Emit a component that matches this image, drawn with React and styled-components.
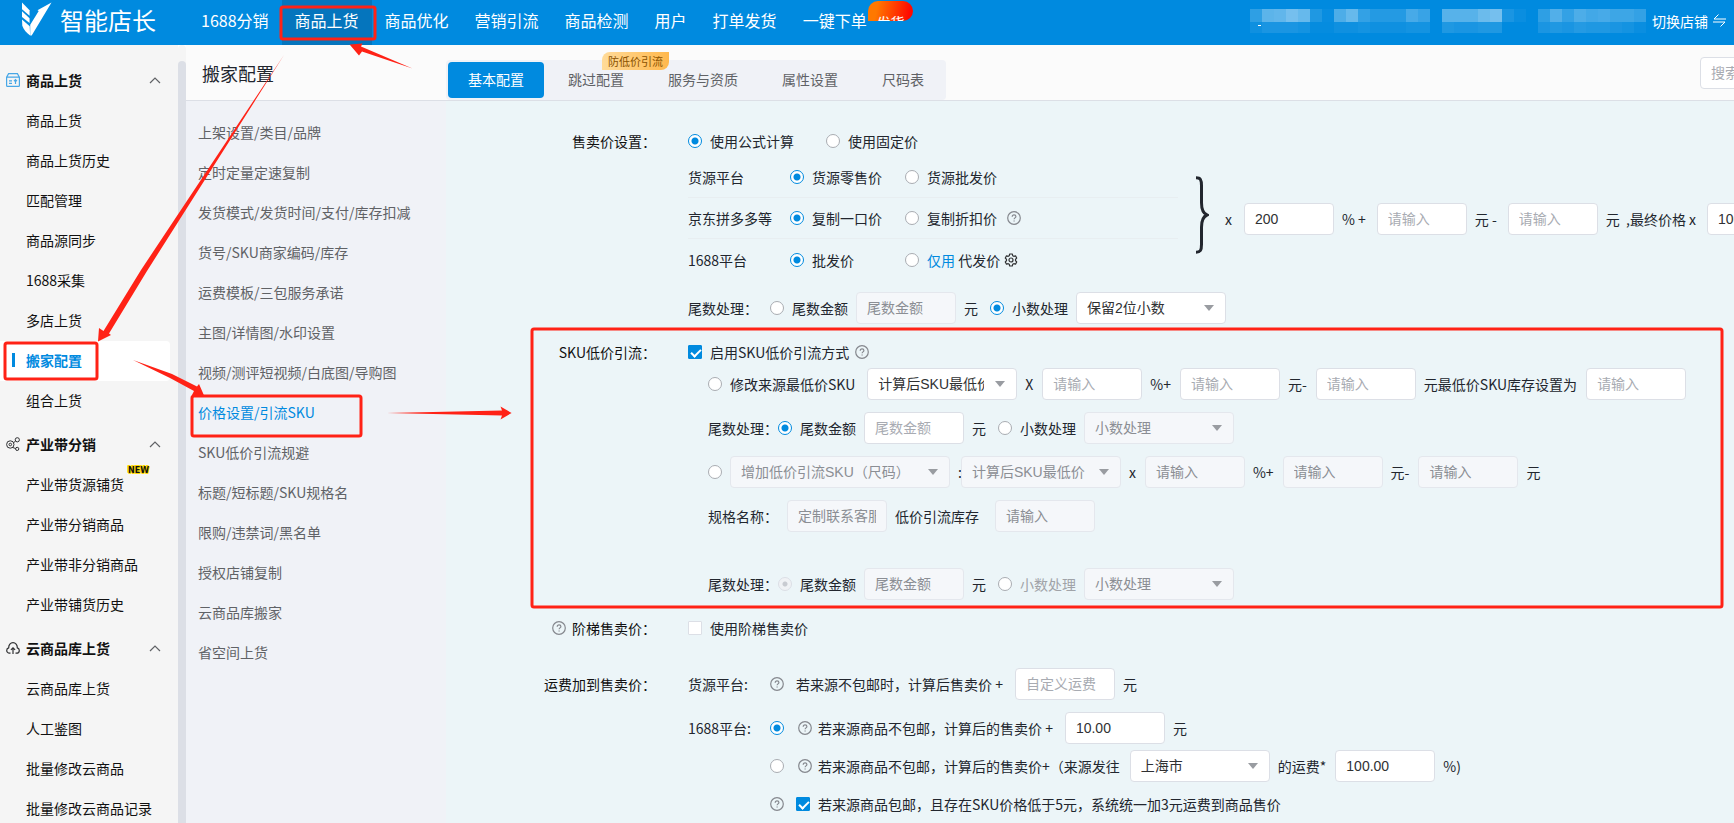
import React from "react";
import styled, { createGlobalStyle, css } from "styled-components";

const topNav = [
  { text: "1688分销" },
  { text: "商品上货", active: true },
  { text: "商品优化" },
  { text: "营销引流" },
  { text: "商品检测" },
  { text: "用户" },
  { text: "打单发货" },
  { text: "一键下单", badge: "发货" },
];

const sideGroups = [
  {
    title: "商品上货",
    icon: "shop",
    items: ["商品上货", "商品上货历史", "匹配管理", "商品源同步", "1688采集", "多店上货", "搬家配置", "组合上货"],
  },
  {
    title: "产业带分销",
    icon: "share",
    items: ["产业带货源铺货", "产业带分销商品", "产业带非分销商品", "产业带铺货历史"],
  },
  {
    title: "云商品库上货",
    icon: "cloud",
    items: ["云商品库上货", "人工鉴图", "批量修改云商品", "批量修改云商品记录"],
  },
];

const settings = [
  "上架设置/类目/品牌",
  "定时定量定速复制",
  "发货模式/发货时间/支付/库存扣减",
  "货号/SKU商家编码/库存",
  "运费模板/三包服务承诺",
  "主图/详情图/水印设置",
  "视频/测评短视频/白底图/导购图",
  "价格设置/引流SKU",
  "SKU低价引流规避",
  "标题/短标题/SKU规格名",
  "限购/违禁词/黑名单",
  "授权店铺复制",
  "云商品库搬家",
  "省空间上货",
];

const tabs = [
  { text: "基本配置", active: true },
  { text: "跳过配置", badge: "防低价引流" },
  { text: "服务与资质" },
  { text: "属性设置" },
  { text: "尺码表" },
];

// opacity of each masked cell in the account strip, one list per row
const maskRows = [
  [0.18, 0.36, 0.38, 0.46, 0.4, 0.12, 0.03, 0.3, 0.4, 0.2, 0.14, 0.14, 0.14, 0.28, 0.22, 0, 0.34, 0.34, 0.34, 0.42, 0.46, 0.1, 0.04, 0, 0.18, 0.32, 0.2, 0.3, 0.26, 0.28, 0.24, 0.24, 0.2],
  [0.06, 0.1, 0.1, 0.1, 0.08, 0.02, 0.02, 0.06, 0.06, 0.08, 0.06, 0.06, 0.06, 0.08, 0.08, 0, 0.12, 0.1, 0.1, 0.12, 0.12, 0, 0, 0, 0.1, 0.12, 0.1, 0.14, 0.12, 0.12, 0.1, 0.08, 0.04],
];

const HelpIcon = () => (
  <Icon width="14" height="14" viewBox="0 0 14 14" fill="none" stroke="#85888e" strokeWidth="1.2">
    <circle cx="7" cy="7" r="6.3" />
    <path d="M5.2 5.7c0-1.1.8-1.9 1.9-1.9s1.8.7 1.8 1.7c0 1.3-1.8 1.4-1.8 2.7M7.1 9.4v1" />
  </Icon>
);

const GearIcon = () => (
  <Icon width="14" height="14" viewBox="0 0 14 14" fill="none" stroke="#303133" strokeWidth="1.2" strokeLinejoin="round">
    <path d="M5.7 1h2.6l.4 1.7 1.1.6 1.7-.5 1.2 2.2-1.2 1.3v1.4l1.2 1.3-1.2 2.2-1.7-.5-1.1.6-.4 1.7H5.700l-.4-1.7-1.1-.6-1.7.5L1.300 9l1.200-1.300V6.300L1.300 5l1.200-2.200 1.700.5 1.100-.6z" />
    <circle cx="7" cy="7" r="2" />
  </Icon>
);

const GroupIcon = ({ name }) => {
  if (name === "shop") {
    return (
      <Icon width="14" height="14" viewBox="0 0 14 14" fill="none" stroke="#48a7e6" strokeWidth="1.2">
        <path d="M2.6.7h8.800l2 3.500H.6zM.6 4.200v8.200c0 .6.3.9.9.9h11c.6 0 .9-.3.9-.9V4.200" />
        <path d="M3 7.800h3M3 10.300h3M9.500 11V6.800M8 8.200l1.500-1.500L11 8.200" />
      </Icon>
    );
  }
  if (name === "share") {
    return (
      <Icon width="14" height="14" viewBox="0 0 14 14" fill="none" stroke="#303133">
        <circle cx="4.3" cy="7.5" r="3.7" />
        <circle cx="4.3" cy="7.5" r="1.3" />
        <circle cx="11.3" cy="2.8" r="2.1" />
        <circle cx="11.2" cy="11.9" r="1.6" />
        <path d="M7.5 5.7l2-1.5M6.7 10.5l3 1" />
      </Icon>
    );
  }
  return (
    <Icon width="14" height="14" viewBox="0 0 14 14" fill="none" stroke="#303133" strokeWidth="1.2">
      <path d="M4.5 12.2h-.9C1.900 12.200.7 11 .7 9.400c0-1.300.8-2.300 2-2.600C2.600 3.900 4.500 1.700 7 1.700s4.400 2.200 4.300 5.100c1.200.3 2 1.300 2 2.600 0 1.600-1.200 2.800-2.900 2.800h-.9" />
      <path d="M7 13V6.800M4.900 8.900L7 6.800l2.100 2.100" />
    </Icon>
  );
};

const Logo = () => (
  <svg width="30" height="36" viewBox="0 0 31 36" fill="#fff">
    <path d="M0 0l7.800 8v5.500L0 7z" />
    <path d="M0 9l7.800 7.200v4.800L0 15z" />
    <path d="M0 17.500l8 7 .4 9.500C5 31.500 1.500 28 .3 24z" />
    <path d="M30.500 0L10 34H8.500V23l8.800-14.200-1.300-.8z" />
  </svg>
);

const Choice = ({ text, type = "radio", muted, ...rest }) => (
  <ChoiceLabel $muted={muted}>
    {type === "radio" ? <Radio type="radio" {...rest} /> : <Checkbox type="checkbox" {...rest} />}
    {text}
  </ChoiceLabel>
);

const Select = ({ label, text, width = 150, disabled }) => (
  <SelectBox $width={width}>
    <SelectControl aria-label={label || text} disabled={disabled}>
      <option>{text}</option>
    </SelectControl>
    <Caret width="10" height="6" viewBox="0 0 10 6">
      <path d="M0 0h10L5 6z" fill="#999ca1" />
    </Caret>
  </SelectBox>
);

const Num = ({ label, hint = "请输入", ...rest }) => (
  <Input aria-label={label} placeholder={hint} {...rest} />
);

// last-digit handling: fixed amount or decimal rounding
const TailRow = ({ name, mode, option, amountDisabled, optionDisabled, locked, wide }) => (
  <Row>
    <TailLabel $wide={wide}>尾数处理：</TailLabel>
    <Choice name={name} text="尾数金额" defaultChecked={mode === "amount"} disabled={locked} />
    <Num label="尾数金额" hint="尾数金额" disabled={amountDisabled} />
    <Unit $end={4}>元</Unit>
    <Choice name={name} text="小数处理" defaultChecked={mode === "decimal"} muted={locked} />
    <Select label="小数处理" text={option} disabled={optionDisabled} />
  </Row>
);

const App = () => {
  return (
    <Page>
      <GlobalStyle />
      <TopBar>
        <Brand>
          <Logo />
          智能店长
        </Brand>
        <Nav>
          {topNav.map((item) => (
            <NavLink href="#" key={item.text} $active={item.active}>
              {item.text}
              {item.badge && <HotBadge>{item.badge}</HotBadge>}
            </NavLink>
          ))}
        </Nav>
        <Account>
          <svg width="396" height="24" viewBox="0 0 396 24" fill="#fff">
            {maskRows.map((cells, y) =>
              cells.map((o, x) => (
                <rect key={x + "-" + y} x={x * 12} y={y * 13} width="12" height={y ? 11 : 13} opacity={o} />
              ))
            )}
            <rect x="8" y="16" width="3" height="1" />
          </svg>
          <Switch type="button">
            切换店铺
            <svg width="13" height="13" viewBox="0 0 13 13" fill="none" stroke="#fff">
              <path d="M5.5.5L1 5h12M0 8h12l-4.500 4.500" />
            </svg>
          </Switch>
        </Account>
      </TopBar>
      <Body>
        <Sidebar>
          {sideGroups.map((group) => (
            <Group key={group.title}>
              <GroupTitle type="button">
                <GroupIcon name={group.icon} />
                {group.title}
                <Chevron width="12" height="8" viewBox="0 0 12 8" fill="none" stroke="#606266" strokeWidth="1.2">
                  <path d="M1 7l5-5 5 5" />
                </Chevron>
              </GroupTitle>
              {group.items.map((item) => (
                <SideLink href="#" key={item} $active={item === "搬家配置"}>
                  {item}
                  {item === "产业带货源铺货" && <NewBadge>NEW</NewBadge>}
                </SideLink>
              ))}
            </Group>
          ))}
        </Sidebar>
        <Scrollbar />
        <Main>
          <Panel>
            <PanelHead>
              <Title>搬家配置</Title>
              <Tabs>
                {tabs.map((tab) => (
                  <Tab type="button" key={tab.text} $active={tab.active}>
                    {tab.text}
                    {tab.badge && <TabBadge>{tab.badge}</TabBadge>}
                  </Tab>
                ))}
              </Tabs>
              <Search aria-label="搜索" placeholder="搜索" />
            </PanelHead>
            <PanelBody>
              <SettingList>
                {settings.map((item) => (
                  <SettingLink href="#" key={item} $active={item === "价格设置/引流SKU"}>
                    {item}
                  </SettingLink>
                ))}
              </SettingList>
              <Form>
                <FormItem>
                  <FormLabel>售卖价设置：</FormLabel>
                  <div>
                    <Row $gap={32}>
                      <Choice name="priceMode" text="使用公式计算" defaultChecked />
                      <Choice name="priceMode" text="使用固定价" />
                    </Row>
                    <Formula>
                      <Sources>
                        <SourceRow>
                          <span>货源平台</span>
                          <Choice name="source" text="货源零售价" defaultChecked />
                          <Choice name="source" text="货源批发价" />
                        </SourceRow>
                        <SourceRow>
                          <span>京东拼多多等</span>
                          <Choice name="jd" text="复制一口价" defaultChecked />
                          <Row $gap={10}>
                            <Choice name="jd" text="复制折扣价" />
                            <HelpIcon />
                          </Row>
                        </SourceRow>
                        <SourceRow>
                          <span>1688平台</span>
                          <Choice name="ali" text="批发价" defaultChecked />
                          <Row $gap={4}>
                            <Choice name="ali" text={<span><Blue>仅用</Blue> 代发价</span>} />
                            <GearIcon />
                          </Row>
                        </SourceRow>
                      </Sources>
                      <Brace width="13" height="78" viewBox="0 0 13 78" fill="none" stroke="#22262e" strokeWidth="3">
                        <path d="M0 1.800c4.500 0 5.500 2 5.500 8v17c0 7 1.500 10.500 5.500 12.200-4 1.700-5.500 5.200-5.500 12.200v17c0 6-1 8-5.500 8" />
                      </Brace>
                      <Unit $end={4}>x</Unit>
                      <Num label="价格百分比" defaultValue="200" $width={90} />
                      <Unit $end={3}>% +</Unit>
                      <Num label="加价" $width={90} />
                      <Unit $end={3}>元 -</Unit>
                      <Num label="减价" $width={90} />
                      <Unit $end={3}>元 &nbsp;,最终价格 x</Unit>
                      <Num label="最终比例" defaultValue="100" $width={90} />
                    </Formula>
                    <Stack $top={12}>
                      <TailRow name="tail1" mode="decimal" option="保留2位小数" amountDisabled wide />
                    </Stack>
                  </div>
                </FormItem>

                <FormItem>
                  <FormLabel>SKU低价引流：</FormLabel>
                  <div>
                    <Row $gap={6}>
                      <Choice type="checkbox" text="启用SKU低价引流方式" defaultChecked />
                      <HelpIcon />
                    </Row>
                    <Stack $indent>
                      <Row>
                        <WideChoice>
                          <Choice name="skuMode" text="修改来源最低价SKU" />
                        </WideChoice>
                        <Select text="计算后SKU最低价" />
                        <Unit>X</Unit>
                        <Num label="百分比" />
                        <Unit>%+</Unit>
                        <Num label="加价" />
                        <Unit>元-</Unit>
                        <Num label="减价" />
                        <Unit>元最低价SKU库存设置为</Unit>
                        <Num label="最低价SKU库存" />
                      </Row>
                      <TailRow name="tail2" mode="amount" option="小数处理" optionDisabled />
                      <Row>
                        <Radio type="radio" name="skuMode" aria-label="增加低价引流SKU" />
                        <Select text="增加低价引流SKU（尺码）" width={220} disabled />
                        <Colon>:</Colon>
                        <Select text="计算后SKU最低价" width={160} disabled />
                        <Unit>x</Unit>
                        <Num label="百分比" disabled />
                        <Unit>%+</Unit>
                        <Num label="加价" disabled />
                        <Unit>元-</Unit>
                        <Num label="减价" disabled />
                        <Unit>元</Unit>
                      </Row>
                      <Row>
                        <Unit>规格名称：</Unit>
                        <Num label="规格名称" hint="定制联系客服" disabled />
                        <Unit $end={8}>低价引流库存</Unit>
                        <Num label="低价引流库存" disabled />
                      </Row>
                      <Stack $top={24}>
                        <TailRow name="tail3" mode="amount" option="小数处理" amountDisabled optionDisabled locked />
                      </Stack>
                    </Stack>
                  </div>
                </FormItem>

                <FormItem>
                  <FormLabel>
                    <HelpIcon />
                    阶梯售卖价：
                  </FormLabel>
                  <Row>
                    <Choice type="checkbox" text="使用阶梯售卖价" />
                  </Row>
                </FormItem>

                <FormItem $top={12}>
                  <FormLabel>运费加到售卖价：</FormLabel>
                  <Stack>
                    <FreightRow>
                      <span>货源平台:</span>
                      <Row $gap={12}>
                        <HelpIcon />
                        <Row>
                          <Unit $end={4}>若来源不包邮时，计算后售卖价 +</Unit>
                          <Num label="自定义运费" hint="自定义运费" />
                          <Unit>元</Unit>
                        </Row>
                      </Row>
                    </FreightRow>
                    <FreightRow>
                      <span>1688平台:</span>
                      <Freights>
                        <Row $gap={14}>
                          <Radio type="radio" name="freight" aria-label="固定运费" defaultChecked />
                          <Row $gap={6}>
                            <HelpIcon />
                            <Row>
                              <Unit $end={4}>若来源商品不包邮，计算后的售卖价 +</Unit>
                              <Num label="运费" defaultValue="10.00" />
                              <Unit>元</Unit>
                            </Row>
                          </Row>
                        </Row>
                        <Row $gap={14}>
                          <Radio type="radio" name="freight" aria-label="来源发往运费" />
                          <Row $gap={6}>
                            <HelpIcon />
                            <Row>
                              <Unit $end={2}>若来源商品不包邮，计算后的售卖价+（来源发往</Unit>
                              <Select label="来源发往" text="上海市" width={140} />
                              <Unit>的运费*</Unit>
                              <Num label="运费比例" defaultValue="100.00" />
                              <Unit>%)</Unit>
                            </Row>
                          </Row>
                        </Row>
                        <Row $gap={12}>
                          <HelpIcon />
                          <Choice
                            type="checkbox"
                            text="若来源商品包邮，且存在SKU价格低于5元，系统统一加3元运费到商品售价"
                            defaultChecked
                          />
                        </Row>
                      </Freights>
                    </FreightRow>
                  </Stack>
                </FormItem>
              </Form>
            </PanelBody>
          </Panel>
        </Main>
      </Body>
      {/* guide frames and arrows over the page */}
      <Guide width="1734" height="823" viewBox="0 0 1734 823">
        <g fill="none" stroke="#ff2216" strokeWidth="3">
          <rect x="281" y="7" width="94" height="32" rx="2" />
          <rect x="5" y="343" width="92" height="36" rx="2" />
          <rect x="192" y="396" width="169" height="40" rx="2" />
          <rect x="532" y="329" width="1190" height="278" rx="2" />
        </g>
        <g fill="#ff2216">
          <path d="M412.500 68.500L362 51.500 359 55.500 349.600 44.500 362.500 43.500 361 46.500z" />
          <path d="M284 55L141 270 103.500 331 99 328 98 341.500 111 335 109 333.500 147 271z" />
          <path d="M133 360L170 378 194 391 192 395 204.500 396.500 199 384 197 386.500 172 374z" />
          <path d="M387 413L502 410.500 500.500 406.500 511.600 413 500.500 419.500 502 415.500z" />
        </g>
      </Guide>
    </Page>
  );
};

export default App;

const GlobalStyle = createGlobalStyle`
  * {
    box-sizing: border-box;
  }
  body {
    margin: 0;
    overflow: hidden;
  }
  body, button, input, select {
    font-family: "Noto Sans CJK SC", sans-serif;
    font-size: 14px;
    color: #22262e;
  }
  a {
    text-decoration: none;
  }
`;

const Page = styled.div`
  position: relative;
  display: flex;
  flex-direction: column;
  height: 100vh;
  overflow: hidden;
  line-height: 20px;
`;

const TopBar = styled.header`
  display: flex;
  flex-shrink: 0;
  height: 45px;
  background-color: #008adf;
  color: white;
`;

const Brand = styled.div`
  display: flex;
  align-items: center;
  gap: 8px;
  width: 188px;
  padding: 0 0 5px 22px;
  font-size: 24px;
  flex-shrink: 0;
`;

const Nav = styled.nav`
  display: flex;
`;

const NavLink = styled.a`
  position: relative;
  display: flex;
  align-items: center;
  padding: 0 13px 5px;
  font-size: 16px;
  color: white;
  white-space: nowrap;
  background-color: ${(props) => (props.$active ? "#0575bd" : "transparent")};
`;

const HotBadge = styled.span`
  position: absolute;
  left: 78px;
  top: 1px;
  width: 45px;
  height: 20px;
  padding-left: 9px;
  overflow: hidden;
  border-radius: 10px 10px 10px 0;
  background: linear-gradient(100deg, #ff7800 20%, #ff0a00 90%);
  font-size: 14px;
  line-height: 42px;
`;

const Account = styled.div`
  display: flex;
  align-items: center;
  gap: 6px;
  margin-left: auto;
  padding: 0 8px 4px 0;
`;

const Switch = styled.button`
  display: flex;
  align-items: center;
  gap: 5px;
  padding: 0;
  border: none;
  background: none;
  color: white;
`;

const Body = styled.div`
  display: flex;
  flex: 1;
  min-height: 0;
`;

const Sidebar = styled.aside`
  width: 178px;
  flex-shrink: 0;
  padding-top: 16px;
  overflow: hidden;
  background-color: #f5f5f5;
`;

const Group = styled.div`
  & + & {
    margin-top: 4px;
  }
`;

const GroupTitle = styled.button`
  display: flex;
  align-items: center;
  gap: 6px;
  width: 100%;
  height: 40px;
  padding: 0 17px 2px 6px;
  border: none;
  background: none;
  font-weight: bold;
  color: #111;
`;

const SideLink = styled.a`
  position: relative;
  display: flex;
  align-items: center;
  height: 40px;
  margin-right: 8px;
  padding: 0 0 2px 26px;
  color: #111;
  ${(props) =>
    props.$active &&
    css`
      background-color: white;
      border-radius: 0 4px 4px 0;
      color: #008adf;
      font-weight: bold;
      &::before {
        content: "";
        position: absolute;
        left: 12px;
        width: 3px;
        height: 14px;
        background-color: #008adf;
      }
    `}
`;

const NewBadge = styled.span`
  position: absolute;
  left: 127px;
  top: 0;
  padding: 0 1px;
  font-family: "DejaVu Sans", sans-serif;
  font-size: 8px;
  line-height: 12px;
  font-weight: bold;
  color: #111;
  text-shadow: 1px 0 #ffd800, -1px 0 #ffd800, 0 1px #ffd800, 0 -1px #ffd800, 1px 1px #ffd800, -1px -1px #ffd800;
`;

const Icon = styled.svg`
  flex-shrink: 0;
`;

const Chevron = styled.svg`
  margin-left: auto;
`;

const Scrollbar = styled.div`
  width: 8px;
  flex-shrink: 0;
  margin-top: 16px;
  border-radius: 4px 4px 0 0;
  background-color: #dcdfe6;
  box-shadow: 0 -16px 0 #f5f5f5;
`;

const Main = styled.main`
  flex: 1;
  min-width: 0;
  overflow: hidden;
`;

const Panel = styled.section`
  display: flex;
  flex-direction: column;
  min-width: 1730px;
  height: 100%;
`;

const PanelHead = styled.div`
  display: flex;
  align-items: flex-end;
  flex-shrink: 0;
  height: 56px;
  padding-right: 16px;
  border-bottom: 1px solid #dcdfe6;
  background-color: #fbfbfb;
`;

const Title = styled.h1`
  align-self: center;
  width: 260px;
  margin: 0;
  padding-left: 16px;
  font-size: 18px;
  font-weight: normal;
`;

const Tabs = styled.div`
  display: flex;
  gap: 4px;
  padding: 2px;
  border-radius: 4px;
  background-color: #f0f2f7;
`;

const Tab = styled.button`
  position: relative;
  height: 36px;
  padding: 0 20px 2px;
  border: none;
  border-radius: 4px;
  background-color: ${(props) => (props.$active ? "#008adf" : "transparent")};
  color: ${(props) => (props.$active ? "white" : "#606266")};
`;

const TabBadge = styled.span`
  position: absolute;
  left: 54px;
  top: -10px;
  width: 67px;
  border-radius: 8px 0 8px 0;
  background: linear-gradient(90deg, #ffdb99, #ffb84d);
  font-size: 11px;
  line-height: 18px;
  color: #8a5200;
  white-space: nowrap;
`;

const PanelBody = styled.div`
  display: flex;
  flex: 1;
  min-height: 0;
`;

const SettingList = styled.nav`
  width: 260px;
  flex-shrink: 0;
  padding: 11px 0 0 12px;
  background-color: #f0f2f7;
`;

const SettingLink = styled.a`
  display: flex;
  align-items: center;
  height: 40px;
  color: ${(props) => (props.$active ? "#008adf" : "#606266")};
`;

const Form = styled.form`
  display: flex;
  flex-direction: column;
  gap: 12px;
  flex: 1;
  padding-top: 24px;
  background-color: #ecf5f8;
  white-space: nowrap;
`;

const FormItem = styled.div`
  display: grid;
  grid-template-columns: 210px 1fr;
  column-gap: 32px;
  margin-top: ${(props) => props.$top || 0}px;
`;

const FormLabel = styled.div`
  display: flex;
  align-items: center;
  justify-content: flex-end;
  gap: 6px;
  height: 32px;
  color: #111;
`;

const Row = styled.div`
  display: flex;
  align-items: center;
  gap: ${(props) => props.$gap || 8}px;
  height: 32px;
`;

const Stack = styled.div`
  display: flex;
  flex-direction: column;
  gap: 12px;
  padding-top: ${(props) => props.$top || 0}px;
  padding-left: ${(props) => (props.$indent ? 20 : 0)}px;
`;

const Formula = styled.div`
  display: flex;
  align-items: center;
  gap: 8px;
`;

const Sources = styled.div`
  width: 490px;
  flex-shrink: 0;
`;

const SourceRow = styled.div`
  display: grid;
  grid-template-columns: 102px 115px 1fr;
  align-items: center;
  height: 41px;
  border-bottom: 1px solid #e8eef1;
  &:last-child {
    border-bottom: none;
  }
`;

const Blue = styled.span`
  color: #008adf;
`;

const Brace = styled.svg`
  flex-shrink: 0;
  margin: 0 8px 8px 10px;
`;

const Unit = styled.span`
  flex-shrink: 0;
  padding-right: ${(props) => props.$end || 1}px;
`;

const Colon = styled.span`
  margin-right: -9px;
`;

const TailLabel = styled.span`
  flex-shrink: 0;
  width: ${(props) => (props.$wide ? 74 : 62)}px;
`;

const WideChoice = styled.div`
  padding-right: 4px;
`;

const ChoiceLabel = styled.label`
  display: inline-flex;
  align-items: center;
  gap: 8px;
  color: ${(props) => (props.$muted ? "#a0a3a8" : "#22262e")};
`;

const Radio = styled.input`
  appearance: none;
  flex-shrink: 0;
  width: 14px;
  height: 14px;
  margin: 0;
  border: 1px solid #a9acb2;
  border-radius: 50%;
  background-color: white;
  &:checked {
    border-color: #008adf;
    background-image: radial-gradient(circle, #008adf 3px, transparent 4px);
  }
  &:checked:disabled {
    border-color: #dcdfe6;
    background-color: #f0f2f5;
    background-image: radial-gradient(circle, #c8cbd1 2px, transparent 3px);
  }
`;

const Checkbox = styled.input`
  appearance: none;
  position: relative;
  flex-shrink: 0;
  width: 14px;
  height: 14px;
  margin: 0;
  border: 1px solid #dcdfe6;
  border-radius: 1px;
  background-color: white;
  &:checked {
    border-color: #008adf;
    background-color: #008adf;
  }
  &:checked::after {
    content: "";
    position: absolute;
    left: 4px;
    top: 1px;
    width: 4px;
    height: 8px;
    border: solid white;
    border-width: 0 2px 2px 0;
    transform: rotate(45deg);
  }
`;

const control = css`
  height: 32px;
  padding: 0 10px;
  border: 1px solid #dcdfe6;
  border-radius: 4px;
  background-color: white;
  font-family: "Liberation Sans", "Noto Sans CJK SC", sans-serif;
  color: #303133;
  opacity: 1;
  &:disabled {
    border-color: #e4e7ed;
    background-color: #f5f7fa;
    color: #8b8e94;
  }
`;

const Input = styled.input`
  ${control}
  width: ${(props) => props.$width || 100}px;
  flex-shrink: 0;
  &::placeholder {
    color: #a8abb2;
  }
  &:disabled::placeholder {
    color: #8b8e94;
  }
`;

const Search = styled(Input)`
  width: 200px;
  margin: 0 0 11px auto;
`;

const SelectBox = styled.div`
  position: relative;
  flex-shrink: 0;
  width: ${(props) => props.$width}px;
`;

const SelectControl = styled.select`
  ${control}
  appearance: none;
  display: block;
  width: 100%;
  padding-right: 32px;
`;

const Caret = styled.svg`
  position: absolute;
  right: 12px;
  top: 13px;
  pointer-events: none;
`;

const FreightRow = styled.div`
  display: grid;
  grid-template-columns: 82px 1fr;
  line-height: 32px;
`;

const Freights = styled.div`
  display: flex;
  flex-direction: column;
  gap: 6px;
`;

const Guide = styled.svg`
  position: absolute;
  left: 0;
  top: 0;
  pointer-events: none;
`;
